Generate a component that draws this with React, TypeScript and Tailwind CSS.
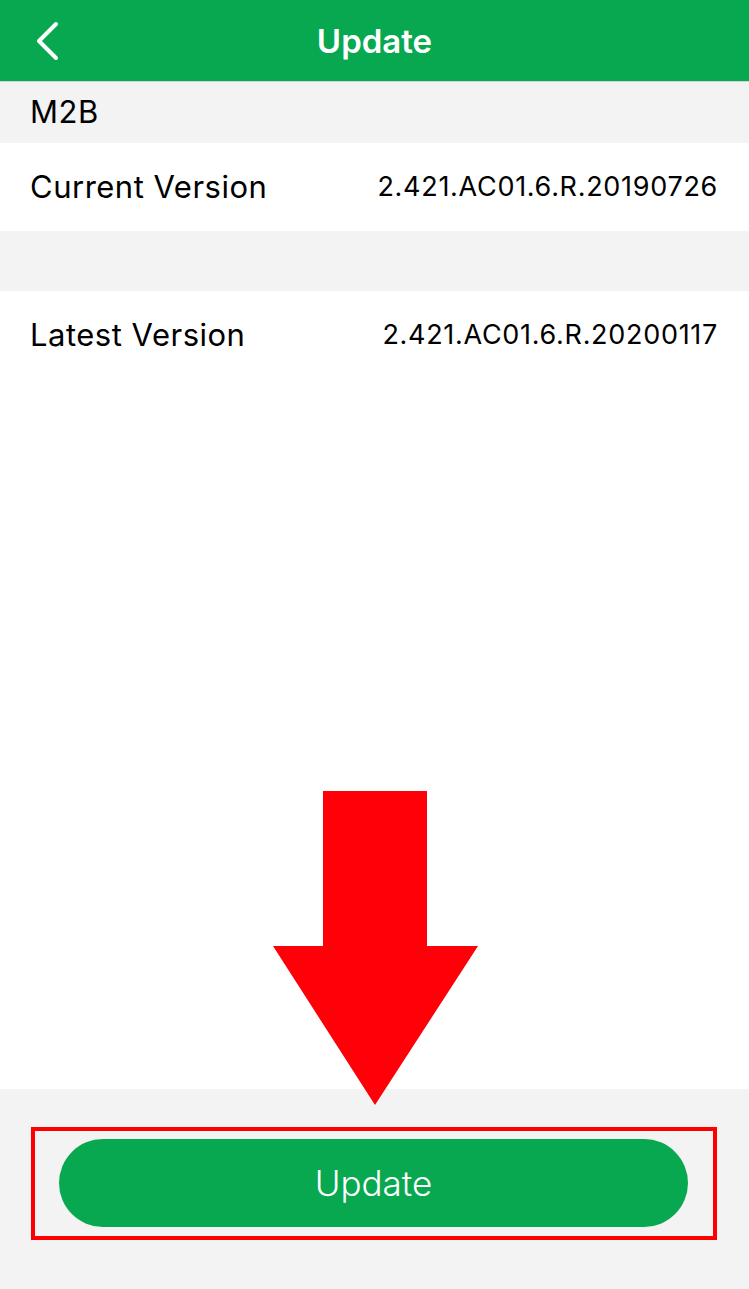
const font = { fontFamily: 'Inter, "Liberation Sans", sans-serif' }

function VersionRow({ label, value }: { label: string; value: string }) {
  return (
    <div className="flex items-center justify-between h-[88px] pl-[30px] pr-[31px] bg-white">
      <span className="text-[31px] tracking-[0.5px] text-black">{label}</span>
      <span className="text-[27px] tracking-[0.7px] text-black">{value}</span>
    </div>
  )
}

function BackIcon() {
  return (
    <svg className="absolute left-[34px] top-[21px]" width="28" height="40" viewBox="0 0 28 40">
      <polyline
        points="22,3 5,20 22,37"
        fill="none"
        stroke="white"
        strokeWidth="4"
        strokeLinecap="round"
        strokeLinejoin="round"
      />
    </svg>
  )
}

function DownArrow() {
  return (
    <svg className="absolute left-[273px] top-[791px]" width="205" height="315" viewBox="0 0 205 315">
      <polygon points="50,0 154,0 154,155 205,155 102,314 0,155 50,155" fill="#ff0008" />
    </svg>
  )
}

export default function App() {
  return (
    <div className="relative flex flex-col h-[1289px] w-[749px] bg-white" style={font}>
      <header className="relative flex items-center justify-center h-[82px] pt-[3px] bg-[#07a84f] border-b border-[#cfd6d1]">
        <BackIcon />
        <h1 className="text-white text-[33px] font-semibold">Update</h1>
      </header>

      <div className="flex items-center h-[61px] px-[30px] bg-[#f3f3f3]">
        <span className="text-[31px] tracking-[0.5px] text-black">M2B</span>
      </div>

      <VersionRow label="Current Version" value="2.421.AC01.6.R.20190726" />

      <div className="h-[60px] bg-[#f3f3f3]" />

      <div className="flex-1 bg-white">
        <VersionRow label="Latest Version" value="2.421.AC01.6.R.20200117" />
      </div>

      <div className="h-[200px] bg-[#f3f3f3] pt-[50px] pl-[59px] pr-[61px]">
        <button className="w-full h-[88px] rounded-full bg-[#07a84f] text-white text-[35px] font-light">
          Update
        </button>
      </div>

      <DownArrow />
      <div className="absolute left-[31px] top-[1127px] w-[686px] h-[113px] border-4 border-[#ff0000]" />
    </div>
  )
}
